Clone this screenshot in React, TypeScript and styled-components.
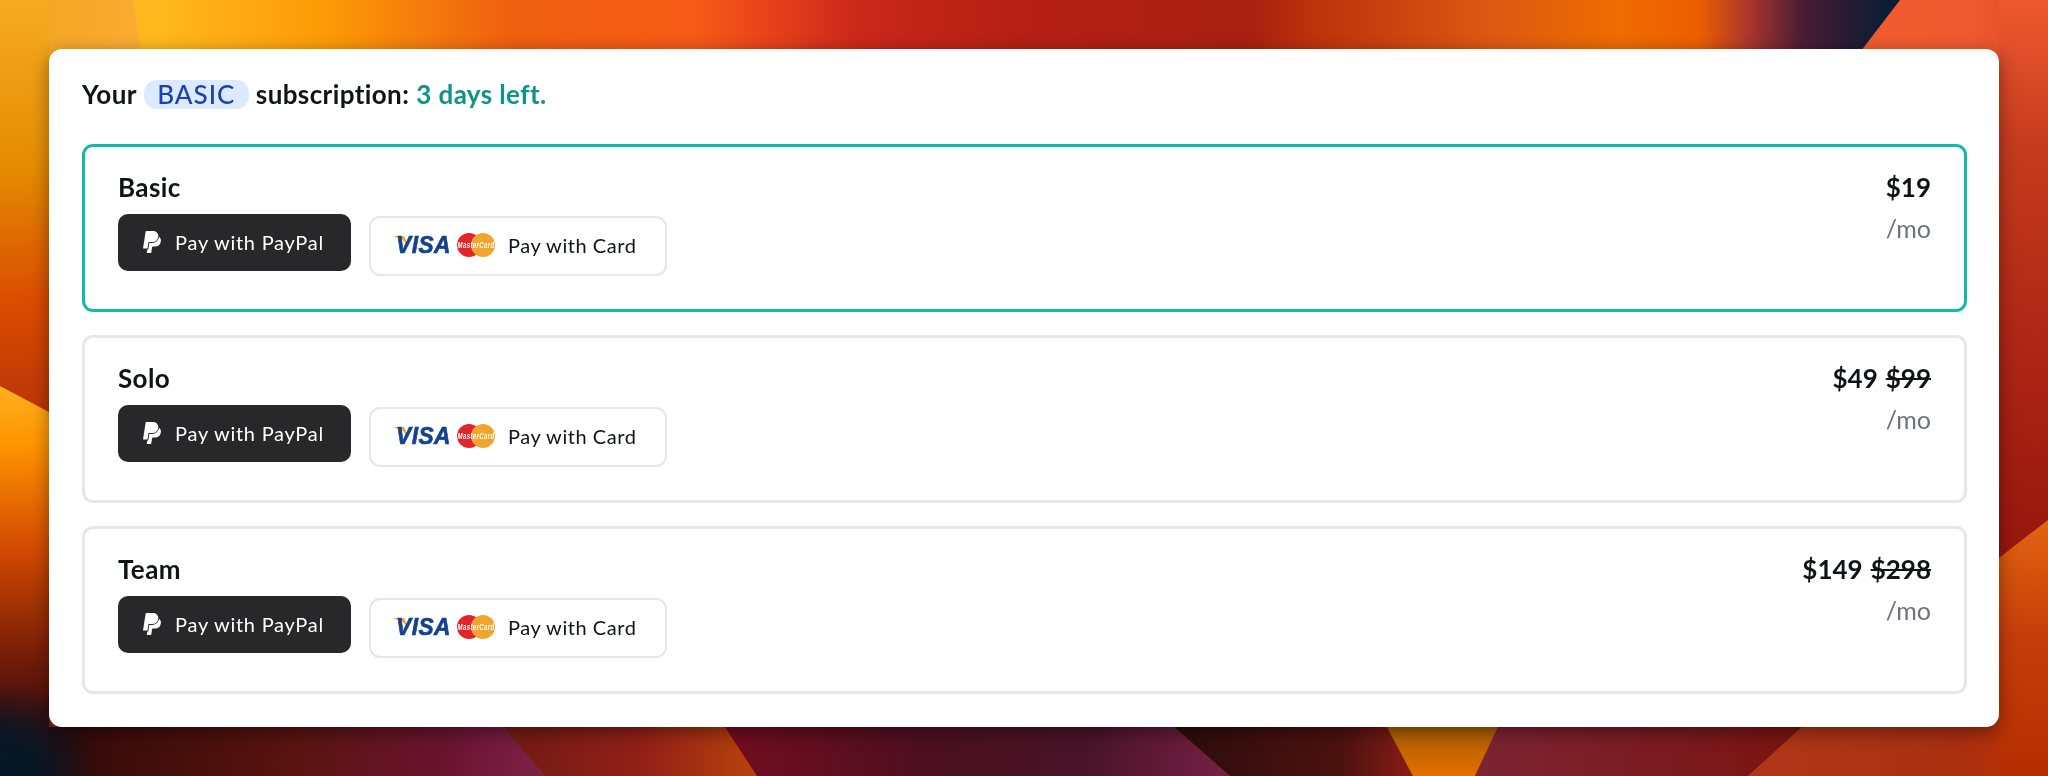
import React from 'react';
import styled, { createGlobalStyle } from 'styled-components';
import { SiPaypal } from 'react-icons/si';

const plans = [
  { name: 'Basic', price: '$19', oldPrice: '', current: true },
  { name: 'Solo', price: '$49', oldPrice: '$99', current: false },
  { name: 'Team', price: '$149', oldPrice: '$298', current: false },
];

const Wallpaper = () => (
  <WallpaperSvg viewBox="0 0 2048 776" preserveAspectRatio="none">
    <defs>
      <linearGradient id="top" x1="0" x2="2048" y1="0" y2="0" gradientUnits="userSpaceOnUse">
        <stop offset="0" stopColor="#ffb91e" />
        <stop offset="0.075" stopColor="#ffb91e" />
        <stop offset="0.16" stopColor="#fc9a06" />
        <stop offset="0.25" stopColor="#ee5f10" />
        <stop offset="0.34" stopColor="#f55a16" />
        <stop offset="0.375" stopColor="#e8421a" />
        <stop offset="0.42" stopColor="#c9281a" />
        <stop offset="0.5" stopColor="#b42012" />
        <stop offset="0.61" stopColor="#a82010" />
        <stop offset="0.64" stopColor="#bb320c" />
        <stop offset="0.73" stopColor="#dc5a12" />
        <stop offset="0.79" stopColor="#ee6c00" />
        <stop offset="0.83" stopColor="#ec5e00" />
        <stop offset="0.855" stopColor="#a8342e" />
        <stop offset="0.88" stopColor="#4a1c32" />
        <stop offset="0.92" stopColor="#0c1c35" />
      </linearGradient>
      <linearGradient id="topLeft" x1="0" x2="143" y1="0" y2="0" gradientUnits="userSpaceOnUse">
        <stop offset="0" stopColor="#f0a41e" />
        <stop offset="1" stopColor="#fbab32" />
      </linearGradient>
      <linearGradient id="topRight" x1="1860" x2="2048" y1="0" y2="0" gradientUnits="userSpaceOnUse">
        <stop offset="0" stopColor="#f25a2e" />
        <stop offset="0.6" stopColor="#ee5a30" />
        <stop offset="1" stopColor="#da4a26" />
      </linearGradient>
      <linearGradient id="leftUpper" x1="0" x2="0" y1="0" y2="420" gradientUnits="userSpaceOnUse">
        <stop offset="0" stopColor="#f6ab22" />
        <stop offset="0.4" stopColor="#e48c02" />
        <stop offset="0.72" stopColor="#da4c00" />
        <stop offset="1" stopColor="#b83408" />
      </linearGradient>
      <linearGradient id="leftLower" x1="0" x2="0" y1="386" y2="776" gradientUnits="userSpaceOnUse">
        <stop offset="0" stopColor="#ffb020" />
        <stop offset="0.15" stopColor="#ff9400" />
        <stop offset="0.42" stopColor="#d24a00" />
        <stop offset="0.68" stopColor="#7a1e08" />
        <stop offset="0.87" stopColor="#3a0c0c" />
        <stop offset="1" stopColor="#2a0a0c" />
      </linearGradient>
      <radialGradient id="corner" cx="0" cy="776" r="95" gradientUnits="userSpaceOnUse">
        <stop offset="0" stopColor="#041828" />
        <stop offset="0.4" stopColor="#041828" stopOpacity="0.9" />
        <stop offset="1" stopColor="#041828" stopOpacity="0" />
      </radialGradient>
      <linearGradient id="rightUpper" x1="0" x2="0" y1="0" y2="560" gradientUnits="userSpaceOnUse">
        <stop offset="0" stopColor="#ee5a30" />
        <stop offset="0.25" stopColor="#c63c1e" />
        <stop offset="0.65" stopColor="#ac2414" />
        <stop offset="1" stopColor="#96160e" />
      </linearGradient>
      <linearGradient id="rightLower" x1="0" x2="0" y1="520" y2="776" gradientUnits="userSpaceOnUse">
        <stop offset="0" stopColor="#e26410" />
        <stop offset="0.45" stopColor="#c63e0a" />
        <stop offset="1" stopColor="#b42e02" />
      </linearGradient>
      <linearGradient id="b1" x1="0" x2="545" y1="0" y2="0" gradientUnits="userSpaceOnUse">
        <stop offset="0.09" stopColor="#2a0a0c" />
        <stop offset="0.2" stopColor="#3a0c0a" />
        <stop offset="0.55" stopColor="#5a1410" />
        <stop offset="0.82" stopColor="#6a1430" />
        <stop offset="1" stopColor="#7c2248" />
      </linearGradient>
      <linearGradient id="b2" x1="503" x2="757" y1="0" y2="0" gradientUnits="userSpaceOnUse">
        <stop offset="0" stopColor="#701a14" />
        <stop offset="0.55" stopColor="#922018" />
        <stop offset="1" stopColor="#b8420a" />
      </linearGradient>
      <linearGradient id="b3" x1="725" x2="1230" y1="0" y2="0" gradientUnits="userSpaceOnUse">
        <stop offset="0" stopColor="#740c20" />
        <stop offset="0.4" stopColor="#4c1020" />
        <stop offset="0.72" stopColor="#4a1428" />
        <stop offset="1" stopColor="#762044" />
      </linearGradient>
      <linearGradient id="b4" x1="1174" x2="1413" y1="0" y2="0" gradientUnits="userSpaceOnUse">
        <stop offset="0" stopColor="#2c0c0c" />
        <stop offset="0.7" stopColor="#4c1210" />
        <stop offset="1" stopColor="#8a1c14" />
      </linearGradient>
      <linearGradient id="b5" x1="0" x2="0" y1="727" y2="776" gradientUnits="userSpaceOnUse">
        <stop offset="0" stopColor="#a85c00" />
        <stop offset="1" stopColor="#e27000" />
      </linearGradient>
      <linearGradient id="b6" x1="1475" x2="1802" y1="0" y2="0" gradientUnits="userSpaceOnUse">
        <stop offset="0" stopColor="#7c2434" />
        <stop offset="1" stopColor="#7a1410" />
      </linearGradient>
      <linearGradient id="b7" x1="1748" x2="2048" y1="0" y2="0" gradientUnits="userSpaceOnUse">
        <stop offset="0" stopColor="#b0361a" />
        <stop offset="0.7" stopColor="#aa3010" />
        <stop offset="1" stopColor="#c03000" />
      </linearGradient>
    </defs>
    <rect x="0" y="0" width="2048" height="60" fill="url(#top)" />
    <polygon points="0,0 133,0 143,60 0,60" fill="url(#topLeft)" />
    <polygon points="1900,0 2048,0 2048,60 1854,60" fill="url(#topRight)" />
    <polygon points="0,0 49,0 49,412 0,386" fill="url(#leftUpper)" />
    <polygon points="0,386 49,412 49,776 0,776" fill="url(#leftLower)" />
    <polygon points="1999,0 2048,0 2048,520 1999,558" fill="url(#rightUpper)" />
    <polygon points="1999,558 2048,520 2048,776 1999,776" fill="url(#rightLower)" />
    <polygon points="49,727 503,727 545,776 49,776" fill="url(#b1)" />
    <polygon points="503,727 725,727 757,776 545,776" fill="url(#b2)" />
    <polygon points="725,727 1174,727 1230,776 757,776" fill="url(#b3)" />
    <polygon points="1174,727 1387,727 1413,776 1230,776" fill="url(#b4)" />
    <polygon points="1387,727 1498,727 1475,776 1413,776" fill="url(#b5)" />
    <polygon points="1498,727 1802,727 1748,776 1475,776" fill="url(#b6)" />
    <polygon points="1802,727 1999,727 1999,776 1748,776" fill="url(#b7)" />
    <rect x="0" y="680" width="95" height="96" fill="url(#corner)" />
  </WallpaperSvg>
);

const CardLogos = () => (
  <LogoSvg viewBox="0 0 104 26" width="104" height="26">
    <polygon points="-1,4 10,4 15,15 9,8" fill="#f4a51f" />
    <text x="2" y="21" fontFamily="Liberation Sans" fontWeight="700" fontStyle="italic" fontSize="24" fill="#14428f" stroke="#14428f" strokeWidth="0.7" textLength="55" lengthAdjust="spacingAndGlyphs">
      VISA
    </text>
    <circle cx="75" cy="13" r="12" fill="#e2242b" />
    <circle cx="89" cy="13" r="12" fill="#f2a52c" />
    <text x="63.5" y="16" fontFamily="Liberation Sans" fontWeight="700" fontStyle="italic" fontSize="9" fill="#ffffff" textLength="37" lengthAdjust="spacingAndGlyphs">
      MasterCard
    </text>
  </LogoSvg>
);

const App: React.FC = () => {
  return (
    <Page>
      <GlobalStyle />
      <Wallpaper />
      <Card>
        <Header>
          <span>Your</span>
          <Badge>BASIC</Badge>
          <span>subscription:</span>
          <DaysLeft>3 days left.</DaysLeft>
        </Header>
        <PlanList>
          {plans.map((plan) => (
            <Plan key={plan.name} $current={plan.current}>
              <PlanLeft>
                <PlanName>{plan.name}</PlanName>
                <Buttons>
                  <PayPalButton>
                    <SiPaypal size={22} />
                    Pay with PayPal
                  </PayPalButton>
                  <CardButton>
                    <CardLogos />
                    Pay with Card
                  </CardButton>
                </Buttons>
              </PlanLeft>
              <PlanRight>
                <Price>
                  {plan.price}
                  {plan.oldPrice && <OldPrice>{plan.oldPrice}</OldPrice>}
                </Price>
                <Period>/mo</Period>
              </PlanRight>
            </Plan>
          ))}
        </PlanList>
      </Card>
    </Page>
  );
};

const GlobalStyle = createGlobalStyle`
  html, body {
    margin: 0;
    padding: 0;
    background: #b3300f;
  }
  body {
    font-family: "Lato", "Noto Sans", sans-serif;
  }
`;

const WallpaperSvg = styled.svg`
  position: fixed;
  inset: 0;
  width: 2048px;
  height: 776px;
`;

const Page = styled.div`
  position: relative;
  box-sizing: border-box;
  width: 2048px;
  height: 776px;
  padding: 49px;
  overflow: hidden;
`;

const Card = styled.div`
  position: relative;
  box-sizing: border-box;
  height: 678px;
  padding: 28px 32px 33px 33px;
  background: #ffffff;
  border-radius: 13px;
  box-shadow: 0 5px 18px rgba(0, 0, 0, 0.42);
`;

const Header = styled.div`
  height: 34px;
  margin-bottom: 33px;
  display: flex;
  align-items: center;
  gap: 7px;
  font-size: 26px;
  font-weight: 700;
  letter-spacing: 0.4px;
  color: #111318;
`;

const Badge = styled.span`
  display: inline-flex;
  align-items: center;
  justify-content: center;
  box-sizing: border-box;
  width: 105px;
  height: 29px;
  background: #dbeafe;
  border-radius: 13px;
  color: #1e40af;
  font-weight: 500;
  letter-spacing: 1px;
`;

const DaysLeft = styled.span`
  color: #0d9488;
`;

const PlanList = styled.div`
  display: flex;
  flex-direction: column;
  gap: 23px;
`;

const Plan = styled.div<{ $current: boolean }>`
  box-sizing: border-box;
  height: 168px;
  padding: 24px 33px 0;
  display: flex;
  justify-content: space-between;
  border: 3px solid ${(p) => (p.$current ? '#14b8a6' : '#e5e7eb')};
  border-radius: 11px;
`;

const PlanLeft = styled.div`
  display: flex;
  flex-direction: column;
`;

const PlanName = styled.div`
  height: 32px;
  line-height: 32px;
  font-size: 26px;
  font-weight: 700;
  letter-spacing: 0.4px;
  color: #111318;
`;

const Buttons = styled.div`
  margin-top: 11px;
  display: flex;
  align-items: flex-start;
  gap: 18px;
`;

const PayPalButton = styled.button`
  box-sizing: border-box;
  width: 233px;
  height: 57px;
  padding: 0 0 2px 23px;
  display: flex;
  align-items: center;
  gap: 12px;
  border: none;
  border-radius: 10px;
  background: #28282a;
  color: #ffffff;
  font-family: inherit;
  font-size: 20px;
  letter-spacing: 0.75px;
`;

const CardButton = styled.button`
  box-sizing: border-box;
  width: 298px;
  height: 60px;
  margin-top: 2px;
  padding: 0 0 2px 23px;
  display: flex;
  align-items: center;
  gap: 10px;
  background: #ffffff;
  border: 2px solid #e5e7eb;
  border-radius: 11px;
  color: #111318;
  font-family: inherit;
  font-size: 20px;
  letter-spacing: 0.55px;
`;

const LogoSvg = styled.svg`
  flex: none;
  overflow: visible;
`;

const PlanRight = styled.div`
  display: flex;
  flex-direction: column;
  align-items: flex-end;
`;

const Price = styled.div`
  height: 32px;
  line-height: 32px;
  display: flex;
  gap: 8px;
  font-size: 26px;
  font-weight: 700;
  color: #111318;
`;

const OldPrice = styled.span`
  text-decoration: line-through;
`;

const Period = styled.div`
  margin-top: 9px;
  height: 32px;
  line-height: 32px;
  font-size: 25px;
  color: #6b7280;
`;

export default App;
